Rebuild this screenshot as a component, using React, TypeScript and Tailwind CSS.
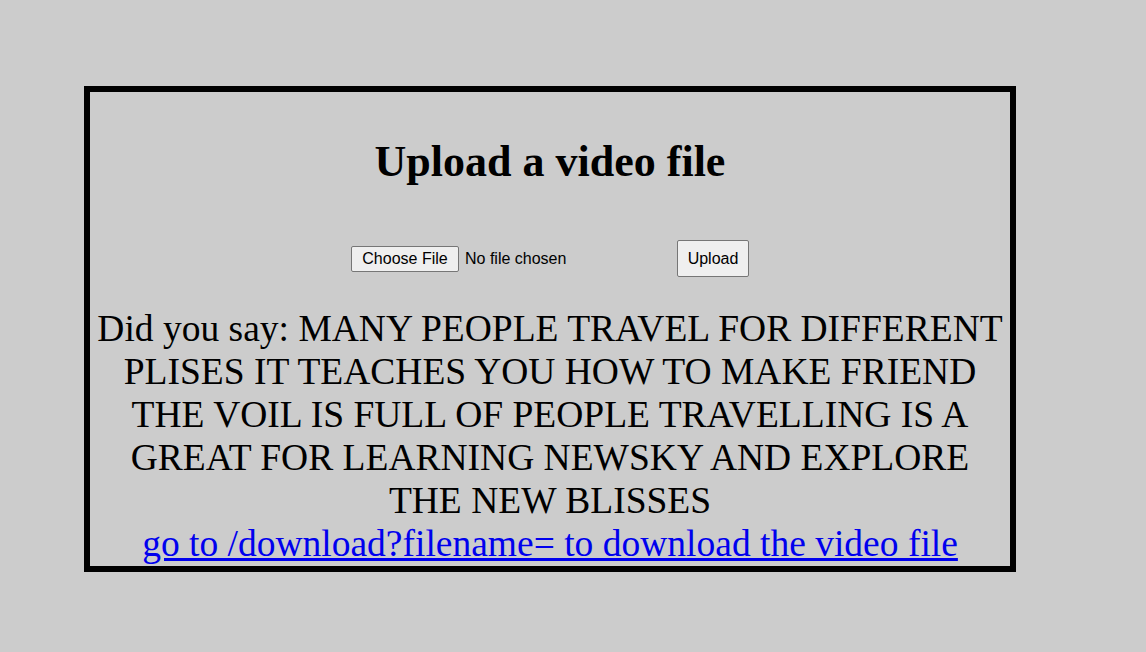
import React from 'react'

const lines = [
  'Did you say: MANY PEOPLE TRAVEL FOR DIFFERENT',
  'PLISES IT TEACHES YOU HOW TO MAKE FRIEND',
  'THE VOIL IS FULL OF PEOPLE TRAVELLING IS A',
  'GREAT FOR LEARNING NEWSKY AND EXPLORE',
  'THE NEW BLISSES',
]

export default function App() {
  return (
    <div className="min-h-screen w-full bg-[#cccccc] pt-[86px] pl-[84px] font-['Liberation_Serif',serif] text-black">
      <div className="box-border flex h-[486px] w-[932px] flex-col items-center border-[6px] border-black">
        <h1 className="mt-[45px] h-[50px] text-center text-[44px] font-bold leading-[50px]">
          Upload a video file
        </h1>

        {/* upload form */}
        <form className="mt-[53px] flex h-[37px] items-center font-['Liberation_Sans',Arial,sans-serif] text-[16px]">
          <div className="flex w-[326px] items-center">
            <button
              type="button"
              className="box-border h-[26px] w-[108px] rounded-[2px] border border-[#767676] bg-[#efefef] text-[16px] leading-none text-black"
            >
              Choose File
            </button>
            <span className="ml-[6px] text-black">No file chosen</span>
          </div>
          <button
            type="button"
            className="box-border h-[37px] w-[72px] rounded-[2px] border border-[#767676] bg-[#efefef] text-[16px] leading-none text-black"
          >
            Upload
          </button>
        </form>

        <p className="mt-[30px] text-center text-[37.5px] leading-[43px]">
          {lines.map((l, i) => (
            <span key={i} className="block whitespace-nowrap">
              {l}
            </span>
          ))}
          <a href="#" className="block whitespace-nowrap text-[#0000ee] underline">
            go to /download?filename= to download the video file
          </a>
        </p>
      </div>
    </div>
  )
}
